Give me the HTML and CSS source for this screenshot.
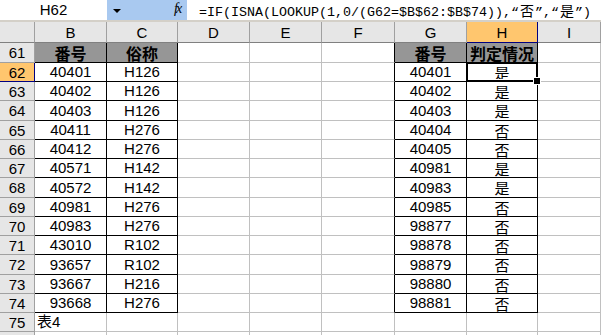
FILE: index.html
```html
<!DOCTYPE html>
<html lang="zh-CN">
  <head>
    <meta charset="UTF-8" />
    <title>表4</title>
    <link rel="stylesheet" href="styles.css">
  </head>
  <body>
    <div class="fbar">
      <div class="namebox">H62</div>
      <div class="drop"><span class="arrow"></span><span class="fx">fx</span></div>
      <div class="formula">=IF(ISNA(LOOKUP(1,0/(G62=$B$62:$B$74)),<span class="q">“</span><span class="w">否</span><span class="q">”</span>,<span class="q">“</span><span class="w">是</span><span class="q">”</span>)</div>
    </div>

    <table class="sheet">
      <colgroup>
        <col class="c-row" />
        <col class="c-b" />
        <col class="c-c" />
        <col class="c-d" />
        <col class="c-e" />
        <col class="c-f" />
        <col class="c-g" />
        <col class="c-h" />
        <col />
      </colgroup>
      <thead>
        <tr>
          <th class="corner"></th>
          <th>B</th><th>C</th><th>D</th><th>E</th><th>F</th><th>G</th>
          <th class="sel">H</th><th>I</th>
        </tr>
      </thead>
      <tbody id="rows"></tbody>
    </table>

    <script>
      var left = [
        ["40401", "H126"], ["40402", "H126"], ["40403", "H126"], ["40411", "H276"],
        ["40412", "H276"], ["40571", "H142"], ["40572", "H142"], ["40981", "H276"],
        ["40983", "H276"], ["43010", "R102"], ["93657", "R102"], ["93667", "H216"],
        ["93668", "H276"]
      ];
      var right = [
        ["40401", "是"], ["40402", "是"], ["40403", "是"], ["40404", "否"],
        ["40405", "否"], ["40981", "是"], ["40983", "是"], ["40985", "否"],
        ["98877", "否"], ["98878", "否"], ["98879", "否"], ["98880", "否"],
        ["98881", "否"]
      ];
      // a few rows are one pixel taller, like the screenshot
      var tall = { 61: 1, 64: 1, 68: 1, 72: 1 };

      function rowStart(n) {
        return '<tr' + (tall[n] ? ' class="tall"' : '') + '>';
      }

      var html = rowStart(61) + '<th class="rh">61</th>' +
        '<td class="t hd">番号</td><td class="t hd">俗称</td><td></td><td></td>' +
        '<td class="edge"></td><td class="t hd">番号</td><td class="t hd">判定情况</td><td></td></tr>';

      for (var i = 0; i < left.length; i++) {
        var n = 62 + i;
        html += rowStart(n) + '<th class="rh' + (n == 62 ? ' sel' : '') + '">' + n + '</th>' +
          '<td class="t">' + left[i][0] + '</td><td class="t">' + left[i][1] + '</td>' +
          '<td></td><td></td><td class="edge"></td>' +
          '<td class="t">' + right[i][0] + '</td>' +
          '<td class="t cjk' + (n == 62 ? ' active' : '') + '">' + right[i][1] + '</td><td></td></tr>';
      }

      html += '<tr><th class="rh">75</th><td class="note">表4</td><td></td><td></td><td></td><td></td><td></td><td></td><td></td></tr>';
      html += '<tr><th class="rh"></th><td></td><td></td><td></td><td></td><td></td><td></td><td></td><td></td></tr>';

      document.getElementById("rows").innerHTML = html;
    </script>
  </body>
</html>
```

FILE: styles.css
```css
* {
  margin: 0;
  padding: 0;
  box-sizing: border-box;
}
body {
  width: 601px;
  height: 335px;
  overflow: hidden;
  background: #ffffff;
  font-family: "Liberation Sans", Arial, "Noto Sans CJK SC", sans-serif;
}

/* formula bar */
.fbar {
  display: flex;
  height: 22px;
  border-bottom: 2px solid #d4d0c8;
}
.namebox {
  width: 107px;
  text-align: center;
  font-size: 15px;
  line-height: 20px;
  color: #000;
}
.drop {
  width: 80px;
  background: #a9c9f0;
  position: relative;
}
.arrow {
  position: absolute;
  left: 6px;
  top: 9px;
  border-left: 4px solid transparent;
  border-right: 4px solid transparent;
  border-top: 4px solid #000;
}
.fx {
  position: absolute;
  left: 67px;
  top: 1px;
  font-family: "Liberation Serif", serif;
  font-style: italic;
  font-size: 14px;
  letter-spacing: -2px;
  color: #000;
}
.formula {
  flex: 1;
  padding-left: 12px;
  font-family: "Liberation Mono", "Noto Sans CJK SC", monospace;
  font-size: 13.333px;
  line-height: 20px;
  white-space: nowrap;
  overflow: hidden;
  color: #000;
}
.formula .q {
  display: inline-block;
  width: 8px;
  text-align: center;
}
.formula .w {
  display: inline-block;
  width: 16px;
  text-align: center;
  font-family: "Noto Sans CJK SC", sans-serif;
  font-size: 14px;
}

/* sheet */
.sheet {
  border-collapse: separate;
  border-spacing: 0;
  table-layout: fixed;
  width: 601px;
}
.c-row { width: 35px; }
.c-b { width: 72px; }
.c-c { width: 71px; }
.c-d { width: 72px; }
.c-e { width: 72px; }
.c-f { width: 73px; }
.c-g { width: 72px; }
.c-h { width: 71px; }

th {
  height: 21px;
  background: #e6e6e6;
  border-right: 1px solid #a0a0a0;
  border-bottom: 1px solid #808080;
  font-weight: normal;
  font-size: 15px;
  color: #000;
  text-align: center;
  vertical-align: middle;
}
th.sel {
  background: #ffc66e;
  border-right-color: #000080;
  border-bottom-color: #000080;
}
th.rh {
  height: 19px;
  border-bottom-color: #a0a0a0;
}
th.rh.sel {
  border-bottom-color: #000080;
  border-right-color: #000080;
}
tr.tall th.rh,
tr.tall td {
  height: 20px;
}

td {
  height: 19px;
  padding: 0 2px 1px;
  border-right: 1px solid #c0c0c0;
  border-bottom: 1px solid #c0c0c0;
  font-size: 15px;
  line-height: 17px;
  text-align: center;
  vertical-align: bottom;
  white-space: nowrap;
  overflow: visible;
  color: #000;
}
td.t,
td.edge {
  border-right-color: #000;
}
td.t {
  border-bottom-color: #000;
}
td.hd {
  background: #969696;
  font-family: "Noto Sans CJK SC", sans-serif;
  font-weight: bold;
  font-size: 16px;
  line-height: 16px;
  padding: 0;
  vertical-align: middle;
}
td.cjk {
  font-family: "Noto Sans CJK SC", sans-serif;
  font-size: 15px;
  line-height: 15px;
  vertical-align: middle;
  padding: 0;
}
td.active {
  position: relative;
}
td.active::before {
  content: "";
  position: absolute;
  left: -1px;
  top: -1px;
  right: -1px;
  bottom: -1px;
  border: 2px solid #000;
  box-shadow: inset 0 0 0 1px #fff;
}
td.active::after {
  content: "";
  position: absolute;
  right: -4px;
  bottom: -4px;
  width: 6px;
  height: 6px;
  background: #000;
  border: 1px solid #fff;
}
td.note {
  text-align: left;
  font-family: "Liberation Sans", "Noto Sans CJK SC", sans-serif;
}
```
